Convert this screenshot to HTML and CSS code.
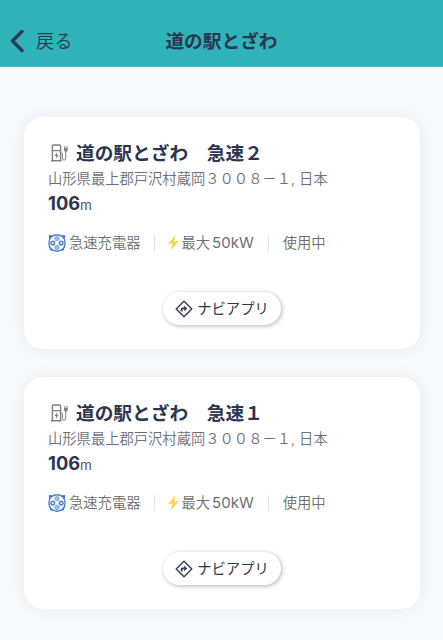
FILE: index.html
```
<!DOCTYPE html>
<html lang="ja">
<head>
    <meta charset="UTF-8">
    <meta name="viewport" content="width=device-width, initial-scale=1.0">
    <title>道の駅とざわ</title>
    <link rel="stylesheet" href="styles.css">
</head>
<body>
    <!-- icons -->
    <svg class="symbols">
        <symbol id="pump" viewBox="0 0 18 18">
            <g fill="none" stroke="#808080" stroke-width="1.4">
                <path d="M1.4 16.5V2.2Q1.4 1 2.6 1H8.4Q9.6 1 9.6 2.2V16.5M0 16.8H10.6M1.4 6.6H9.6"/>
                <path d="M9.7 8.8H10.4Q11.4 8.8 11.4 9.8V14.3Q11.4 16.2 13 16.2T14.7 14.3V7.5" stroke-width="1"/>
                <path d="M13.8 2V4.3M16 2V4.3" stroke-width="1"/>
            </g>
            <path d="M13 4H16.8V5.6Q16.8 7.9 14.9 7.9T13 5.6ZM6.2 8L3.6 12.1H5.2L4.8 15L7.6 11H6Z" fill="#808080"/>
        </symbol>
        <symbol id="plug" viewBox="0 0 18 18">
            <g fill="none" stroke="#4b7fd0">
                <path d="M3.2 2.8Q9-1.2 14.8 2.8Q16.8 5 17.1 9Q17.1 12.5 14.8 15.2Q9 19.2 3.2 15.2Q.9 12.5 .9 9Q1.2 5 3.2 2.8Z" stroke-width="1.4"/>
                <circle cx="4.8" cy="9" r="1.8" stroke-width="1.5"/>
                <circle cx="13.2" cy="9" r="1.8" stroke-width="1.5"/>
            </g>
            <circle cx="9" cy="4.6" r="2.3" fill="#9db9e6" stroke="#7ea2dd" stroke-width=".7"/>
            <circle cx="9" cy="13.4" r="2.3" fill="#9db9e6" stroke="#7ea2dd" stroke-width=".7"/>
            <path d="M.8 1.2L4.2 1L1.2 5ZM17.2 1.2L13.8 1L16.8 5ZM1.5 13L5.4 17L2.3 16.3ZM16.5 13L12.6 17L15.7 16.3Z" fill="#3972d2"/>
        </symbol>
        <symbol id="bolt" viewBox="0 0 11 16">
            <path d="M7.5 0L0 9.2L4.7 8.5L2.3 16L11 5.8L6 6.7Z" fill="#ffd447"/>
        </symbol>
        <symbol id="navi" viewBox="0 0 18 18">
            <path d="M9 1.2L16.8 9L9 16.8L1.2 9Z" fill="none" stroke="#343d58" stroke-width="1.4" stroke-linejoin="round"/>
            <path d="M6.6 11.5V9.3Q6.6 8.4 7.6 8.4H9.7" fill="none" stroke="#343d58" stroke-width="1.8"/>
            <path d="M9.2 5.6L12.3 8.4L9.2 11.2Z" fill="#343d58"/>
        </symbol>
    </svg>

    <!-- header -->
    <div class="header">
        <a href="#" class="back">
            <svg class="back-icon" viewBox="0 0 14 24"><path d="M12 2.5L2.5 12L12 21.5" fill="none" stroke="#2d3955" stroke-width="3.3" stroke-linecap="round" stroke-linejoin="round"/></svg>
            <span>戻る</span>
        </a>
        <h1>道の駅とざわ</h1>
    </div>

    <!-- charger list -->
    <div class="list">
        <div class="card">
            <div class="name"><svg class="pump"><use href="#pump"/></svg><h2>道の駅とざわ　急速２</h2></div>
            <p class="address">山形県最上郡戸沢村蔵岡３００８－１, 日本</p>
            <p class="distance"><b>106</b>m</p>
            <ul class="info">
                <li><svg class="plug"><use href="#plug"/></svg>急速充電器</li>
                <li><svg class="bolt"><use href="#bolt"/></svg>最大<span class="kw">50kW</span></li>
                <li>使用中</li>
            </ul>
            <a href="#" class="navi"><svg><use href="#navi"/></svg>ナビアプリ</a>
        </div>
        <div class="card">
            <div class="name"><svg class="pump"><use href="#pump"/></svg><h2>道の駅とざわ　急速１</h2></div>
            <p class="address">山形県最上郡戸沢村蔵岡３００８－１, 日本</p>
            <p class="distance"><b>106</b>m</p>
            <ul class="info">
                <li><svg class="plug"><use href="#plug"/></svg>急速充電器</li>
                <li><svg class="bolt"><use href="#bolt"/></svg>最大<span class="kw">50kW</span></li>
                <li>使用中</li>
            </ul>
            <a href="#" class="navi"><svg><use href="#navi"/></svg>ナビアプリ</a>
        </div>
    </div>
</body>
</html>
```

FILE: styles.css
```
*{
    margin: 0;
    padding: 0;
    list-style: none;
    box-sizing: border-box;
}

body{
    height: 640px;
    overflow: hidden;
    background-color: #f9fafc;
    font-family: Inter, "Noto Sans CJK JP", sans-serif;
    color: #2d3650;
}

a{
    color: inherit;
    text-decoration: none;
}

svg{
    display: block;
    flex: none;
}

.symbols{
    display: none;
}

.header{
    height: 67px;
    padding: 16px 10px 0;
    display: grid;
    grid-template-columns: 1fr auto 1fr;
    align-items: center;
    background-color: #30b2b9;
    border-bottom: 1px solid #57b9c1;
}

.back{
    display: flex;
    align-items: center;
    font-size: 18.2px;
    line-height: 24px;
    font-weight: 350;
}

.back-icon{
    width: 14px;
    height: 24px;
    margin-right: 12px;
}

h1, h2{
    font-size: 18.7px;
    line-height: 28px;
    font-weight: 700;
    white-space: nowrap;
}

h1{
    padding-top: 2px;
}

.list{
    padding: 50px 23px 0 24px;
    display: flex;
    flex-direction: column;
    gap: 28px;
}

.card{
    height: 232px;
    padding: 23px 24px 0;
    display: flex;
    flex-direction: column;
    border-radius: 19px;
    background-color: #fff;
    box-shadow: 0 0 16px rgba(50, 60, 110, 0.09);
}

.name{
    height: 27px;
    display: flex;
    align-items: center;
}

.pump{
    width: 18px;
    height: 18px;
    margin: 0 7px 2px 3px;
}

.address{
    font-size: 14.3px;
    line-height: 24px;
    font-weight: 350;
    color: #6c7180;
    white-space: nowrap;
}

.distance{
    font-size: 13.5px;
    line-height: 25px;
    color: #4d556b;
}

.distance b{
    font-size: 18.3px;
    color: #2d3650;
}

.info{
    height: 24px;
    margin-top: 13px;
    display: flex;
    align-items: center;
    font-size: 14.3px;
    font-weight: 350;
    color: #6e6e6e;
    white-space: nowrap;
}

.info li{
    display: flex;
    align-items: center;
    line-height: 16px;
}

.info li + li{
    margin-left: 14px;
    padding-left: 13px;
    border-left: 1px solid #e3e3e3;
}

.info li:last-child{
    padding-left: 14px;
}

.plug{
    width: 18px;
    height: 18px;
    margin-right: 3px;
}

.bolt{
    width: 11px;
    height: 16px;
    margin-right: 2px;
}

.kw{
    margin-left: 2px;
    font-size: 15px;
    font-weight: 400;
}

.navi{
    width: 118px;
    height: 33px;
    margin: 37px auto 0;
    padding-bottom: 2px;
    display: flex;
    align-items: center;
    justify-content: center;
    border-radius: 17px;
    font-size: 14.3px;
    box-shadow: 1px 1px 4px rgba(0, 0, 0, 0.3);
}

.navi svg{
    width: 18px;
    height: 18px;
    margin: 2px 4px 0 0;
}
```
